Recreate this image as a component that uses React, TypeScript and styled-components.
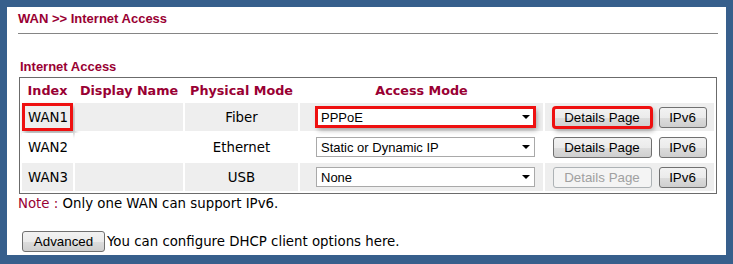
import React from 'react';
import styled, { createGlobalStyle, css } from 'styled-components';

const Global = createGlobalStyle`
  html, body { margin: 0; padding: 0; background: #375f8c; }
  body { width: 733px; height: 264px; overflow: hidden; }
`;

const CRIMSON = '#990033';
const VERDANA = '"DejaVu Sans", Verdana, sans-serif';
const ARIAL = '"Liberation Sans", Arial, sans-serif';

const Frame = styled.div`
  width: 733px;
  height: 264px;
  box-sizing: border-box;
  padding: 7px;
  background: #375f8c;
`;

const Panel = styled.div`
  background: #ffffff;
  width: 719px;
  height: 248px;
  box-sizing: border-box;
  padding: 0 8px 0 11px;
  display: flex;
  flex-direction: column;
`;

const PageTitle = styled.h1`
  margin: 4px 0 0 0;
  padding: 0 0 7px 0;
  font: bold 13px/15px ${ARIAL};
  color: ${CRIMSON};
  border-bottom: 1px solid #858585;
`;

const SectionTitle = styled.h2`
  margin: 25px 0 0 2px;
  font: bold 13px/15px ${ARIAL};
  color: ${CRIMSON};
`;

const Table = styled.table`
  margin: 3px 0 0 1px;
  width: 698px;
  border: 1px solid #6b6b6b;
  border-spacing: 2px;
  border-collapse: separate;
  table-layout: fixed;
`;

const Head = styled.th<{ $w: number }>`
  width: ${(p) => p.$w}px;
  height: 21px;
  padding: 0;
  font: bold 12.75px/15px ${VERDANA};
  color: ${CRIMSON};
  text-align: center;
  vertical-align: middle;
  white-space: nowrap;
`;

const highlight = css`
  outline: 3px solid #ee1010;
  box-shadow: 2px 3px 5px rgba(0, 0, 0, 0.35);
`;

const Cell = styled.td<{ $shade: boolean; $align?: 'left' | 'center'; $pad?: number; $hl?: boolean }>`
  height: 28px;
  padding: 0 0 0 ${(p) => p.$pad ?? 0}px;
  background: ${(p) => (p.$shade ? '#eeeeee' : '#ffffff')};
  font: 13.33px/15px ${VERDANA};
  color: #000;
  text-align: ${(p) => p.$align ?? 'left'};
  vertical-align: middle;
  ${(p) => p.$hl && css`
    outline: 3px solid #ee1010;
    outline-offset: -3px;
    box-shadow: 2px 3px 5px rgba(0, 0, 0, 0.35);
  `}
`;

const SelectWrap = styled.span<{ $hl?: boolean }>`
  position: relative;
  display: inline-block;
  width: 219px;
  height: 20px;
  vertical-align: middle;
  ${(p) => p.$hl && css`
    ${highlight};
    outline-offset: -2px;
  `}
  &::after {
    content: '';
    position: absolute;
    right: 5px;
    top: 8px;
    border-left: 4px solid transparent;
    border-right: 4px solid transparent;
    border-top: 4px solid #000;
    pointer-events: none;
  }
`;

const Select = styled.select`
  appearance: none;
  -webkit-appearance: none;
  width: 219px;
  height: 20px;
  box-sizing: border-box;
  margin: 0;
  padding: 0 0 0 4px;
  border: 1px solid #a9a9a9;
  border-radius: 0;
  background: #fff;
  font: 13px ${ARIAL};
  color: #000;
`;

const ButtonGroup = styled.div`
  display: flex;
  justify-content: center;
  align-items: center;
  gap: 7px;
`;

const Button = styled.button<{ $w: number; $hl?: boolean }>`
  width: ${(p) => p.$w}px;
  height: 21px;
  box-sizing: border-box;
  margin: 0;
  padding: 0;
  border: 1px solid #707070;
  border-radius: 3px;
  background: linear-gradient(#f2f2f2 0%, #ebebeb 50%, #dddddd 51%, #cfcfcf 100%);
  font: 13.33px ${ARIAL};
  color: #000;
  &:disabled {
    border-color: #adb2b5;
    background: #f4f4f4;
    color: #a0a0a0;
  }
  ${(p) => p.$hl && css`
    ${highlight};
    outline-offset: -2px;
  `}
`;

const Note = styled.p`
  margin: 2px 0 0 0;
  font: 13.33px/15px ${VERDANA};
  color: #000;
`;

const NoteLabel = styled.span`
  color: ${CRIMSON};
`;

const AdvancedRow = styled.div`
  margin: 20px 0 0 4px;
  display: flex;
  align-items: center;
  gap: 2px;
  font: 13.33px/15px ${VERDANA};
  color: #000;
`;

type Row = { index: string; phys: string; mode: string; options: string[]; detailsEnabled: boolean; hl?: boolean };

const OPTIONS = ['PPPoE', 'Static or Dynamic IP', 'None'];

const rows: Row[] = [
  { index: 'WAN1', phys: 'Fiber', mode: 'PPPoE', options: OPTIONS, detailsEnabled: true, hl: true },
  { index: 'WAN2', phys: 'Ethernet', mode: 'Static or Dynamic IP', options: OPTIONS, detailsEnabled: true },
  { index: 'WAN3', phys: 'USB', mode: 'None', options: OPTIONS, detailsEnabled: false },
];

export default function App() {
  return (
    <>
      <Global />
      <Frame>
        <Panel>
          <PageTitle>WAN &gt;&gt; Internet Access</PageTitle>
          <SectionTitle>Internet Access</SectionTitle>
          <Table>
            <thead>
              <tr>
                <Head $w={51}>Index</Head>
                <Head $w={108}>Display Name</Head>
                <Head $w={113}>Physical Mode</Head>
                <Head $w={243}>Access Mode</Head>
                <Head $w={169}></Head>
              </tr>
            </thead>
            <tbody>
              {rows.map((r, i) => {
                const shade = i % 2 === 0;
                return (
                  <tr key={r.index}>
                    <Cell $shade={shade} $pad={6} $hl={r.hl}>{r.index}</Cell>
                    <Cell $shade={shade}></Cell>
                    <Cell $shade={shade} $align="center">{r.phys}</Cell>
                    <Cell $shade={shade} $pad={16}>
                      <SelectWrap $hl={r.hl}>
                        <Select defaultValue={r.mode}>
                          {r.options.map((o) => (
                            <option key={o}>{o}</option>
                          ))}
                        </Select>
                      </SelectWrap>
                    </Cell>
                    <Cell $shade={shade}>
                      <ButtonGroup>
                        <Button $w={99} $hl={r.hl} disabled={!r.detailsEnabled}>Details Page</Button>
                        <Button $w={48}>IPv6</Button>
                      </ButtonGroup>
                    </Cell>
                  </tr>
                );
              })}
            </tbody>
          </Table>
          <Note>
            <NoteLabel>Note :</NoteLabel> Only one WAN can support IPv6.
          </Note>
          <AdvancedRow>
            <Button $w={83}>Advanced</Button>
            <span>You can configure DHCP client options here.</span>
          </AdvancedRow>
        </Panel>
      </Frame>
    </>
  );
}
